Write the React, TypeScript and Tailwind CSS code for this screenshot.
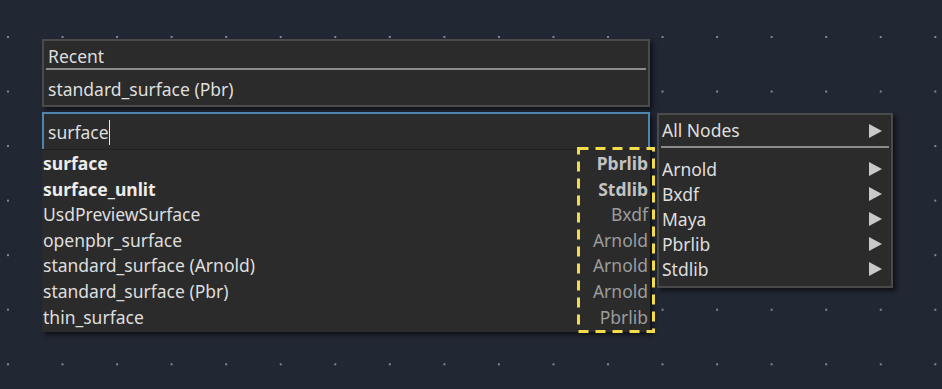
import React from 'react'

const results = [
  { name: 'surface', lib: 'Pbrlib', bold: true },
  { name: 'surface_unlit', lib: 'Stdlib', bold: true },
  { name: 'UsdPreviewSurface', lib: 'Bxdf' },
  { name: 'openpbr_surface', lib: 'Arnold' },
  { name: 'standard_surface (Arnold)', lib: 'Arnold' },
  { name: 'standard_surface (Pbr)', lib: 'Arnold' },
  { name: 'thin_surface', lib: 'Pbrlib' },
]

const categories = ['Arnold', 'Bxdf', 'Maya', 'Pbrlib', 'Stdlib']

function Arrow() {
  return (
    <svg width="14" height="14" viewBox="0 0 14 14" className="shrink-0">
      <polygon points="1,0 14,7 1,14" fill="#c9c9c9" />
    </svg>
  )
}

export default function App() {
  return (
    <div
      className="relative w-[942px] h-[389px] overflow-hidden bg-[#212733] bg-[radial-gradient(circle_at_1px_1px,#7f8898_0.9px,transparent_1.3px)] bg-[length:54.55px_54.55px] bg-[position:7px_36px] font-['Noto_Sans',sans-serif] text-[17.5px] text-[#dedede]"
    >
      <div className="flex items-start pt-[39px] pl-[42px] gap-[7px]">
        {/* left column */}
        <div className="w-[608px] flex flex-col gap-[5px]">
          {/* recent */}
          <div className="h-[68px] border-2 border-[#4a4a4a] bg-[#2b2b2b] shadow-[3px_3px_4px_rgba(0,0,0,0.55)] flex flex-col">
            <div className="h-[27px] flex items-center px-[4px] pt-[4px] leading-none">Recent</div>
            <div className="h-[2px] mx-[2px] bg-[#8c8c8c]" />
            <div className="flex-1 flex items-center px-[4px] pt-[4px] leading-none">standard_surface (Pbr)</div>
          </div>

          {/* search */}
          <div className="shadow-[3px_3px_4px_rgba(0,0,0,0.55)] bg-[#2b2b2b]">
            <div className="h-[37px] border-2 border-b-0 border-[#4e84ad] flex items-center px-[4px] pt-[2px] leading-none">
              <span>surface</span>
              <span className="w-px h-[25px] bg-[#e6e6e6]" />
            </div>
            <div className="h-px bg-[#202020]" />
            <div className="pb-[3px]">
              {results.map((r) => (
                <div key={r.name} className="h-[25.6px] flex items-center justify-between pl-px pr-[2px] pt-[2px] leading-none">
                  <span className={r.bold ? 'font-bold text-[#ececec]' : ''}>{r.name}</span>
                  <span className={r.bold ? 'font-bold text-[#c2c2c2]' : 'text-[#9c9c9c]'}>{r.lib}</span>
                </div>
              ))}
            </div>
          </div>
        </div>

        {/* category menu */}
        <div className="mt-[74px] w-[236px] border-2 border-[#4a4a4a] bg-[#2b2b2b] shadow-[3px_3px_4px_rgba(0,0,0,0.55)] pb-[5px]">
          <div className="h-[31px] flex items-center justify-between pl-[3px] pr-[9px] leading-none">
            <span>All Nodes</span>
            <Arrow />
          </div>
          <div className="h-[2px] mx-[2px] bg-[#8c8c8c]" />
          <div className="pt-[8px]">
            {categories.map((c) => (
              <div key={c} className="h-[25px] flex items-center justify-between pl-[3px] pr-[9px] leading-none">
                <span className="pt-[2px]">{c}</span>
                <Arrow />
              </div>
            ))}
          </div>
        </div>
      </div>

      {/* highlight annotation */}
      <svg className="absolute left-[577px] top-[147px]" width="78" height="186" viewBox="0 0 78 186">
        <rect x="1.5" y="1.5" width="75" height="183" fill="none" stroke="#f2dc4c" strokeWidth="3" strokeDasharray="10 7" />
      </svg>
    </div>
  )
}
